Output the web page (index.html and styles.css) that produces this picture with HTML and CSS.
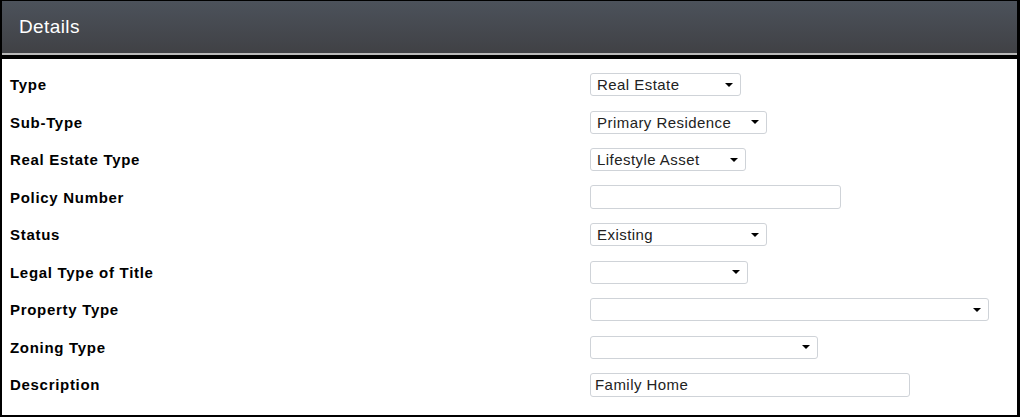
FILE: index.html
```html
<!DOCTYPE html>
<html>
<head>
<meta charset="utf-8">
<link rel="stylesheet" href="styles.css">
</head>
<body>
<div class="panel">
  <div class="header"><span class="title">Details</span></div>
  <div class="header-rule"></div>
  <div class="form">
    <div class="row"><div class="label">Type</div><div class="field"><div class="select w150"><span class="val">Real Estate</span><span class="caret"></span></div></div></div>
    <div class="row"><div class="label">Sub-Type</div><div class="field"><div class="select w176"><span class="val">Primary Residence</span><span class="caret"></span></div></div></div>
    <div class="row"><div class="label">Real Estate Type</div><div class="field"><div class="select w155"><span class="val">Lifestyle Asset</span><span class="caret"></span></div></div></div>
    <div class="row"><div class="label">Policy Number</div><div class="field"><div class="input w250"></div></div></div>
    <div class="row"><div class="label">Status</div><div class="field"><div class="select w176"><span class="val">Existing</span><span class="caret"></span></div></div></div>
    <div class="row"><div class="label">Legal Type of Title</div><div class="field"><div class="select w157"><span class="val"></span><span class="caret"></span></div></div></div>
    <div class="row"><div class="label">Property Type</div><div class="field"><div class="select w398"><span class="val"></span><span class="caret"></span></div></div></div>
    <div class="row"><div class="label">Zoning Type</div><div class="field"><div class="select w227"><span class="val"></span><span class="caret"></span></div></div></div>
    <div class="row"><div class="label">Description</div><div class="field"><div class="input w319"><span class="val">Family Home</span></div></div></div>
  </div>
</div>
</body>
</html>
```

FILE: styles.css
```css
html, body {
  margin: 0;
  padding: 0;
  background: #fff;
}
.panel {
  box-sizing: border-box;
  width: 1020px;
  height: 417px;
  border-style: solid;
  border-color: #000;
  border-width: 1px 3px 2px 2px;
  font-family: "Liberation Sans", Arial, sans-serif;
  display: flex;
  flex-direction: column;
}
.header {
  height: 52px;
  background: linear-gradient(#4c525b, #404145);
  border-bottom: 2px solid #b9b9b9;
  display: flex;
  align-items: center;
  padding-left: 17px;
}
.title {
  color: #fff;
  font-size: 19px;
  letter-spacing: 0.4px;
}
.header-rule {
  height: 4px;
  background: #000;
}
.form {
  padding: 7px 0 0 8px;
}
.row {
  height: 37.5px;
  display: grid;
  grid-template-columns: 580px 1fr;
  align-items: center;
}
.label {
  font-weight: bold;
  font-size: 15px;
  letter-spacing: 0.7px;
  color: #000;
}
.field {
  display: flex;
  align-items: center;
}
.select, .input {
  box-sizing: border-box;
  height: 23px;
  border: 1px solid #cfd3d8;
  border-radius: 3px;
  display: flex;
  align-items: center;
  padding: 0 7px 0 6px;
  font-size: 15px;
  letter-spacing: 0.45px;
  color: #222;
  background: #fff;
}
.input {
  height: 24px;
  padding-left: 4px;
}
.val {
  flex: 1;
  white-space: nowrap;
}
.caret {
  width: 0;
  height: 0;
  border-left: 4px solid transparent;
  border-right: 4px solid transparent;
  border-top: 4px solid #000;
}
.w150 { width: 151px; }
.w176 { width: 177px; }
.w155 { width: 156px; }
.w157 { width: 158px; }
.w250 { width: 251px; }
.w398 { width: 399px; }
.w227 { width: 228px; }
.w319 { width: 320px; }
```
